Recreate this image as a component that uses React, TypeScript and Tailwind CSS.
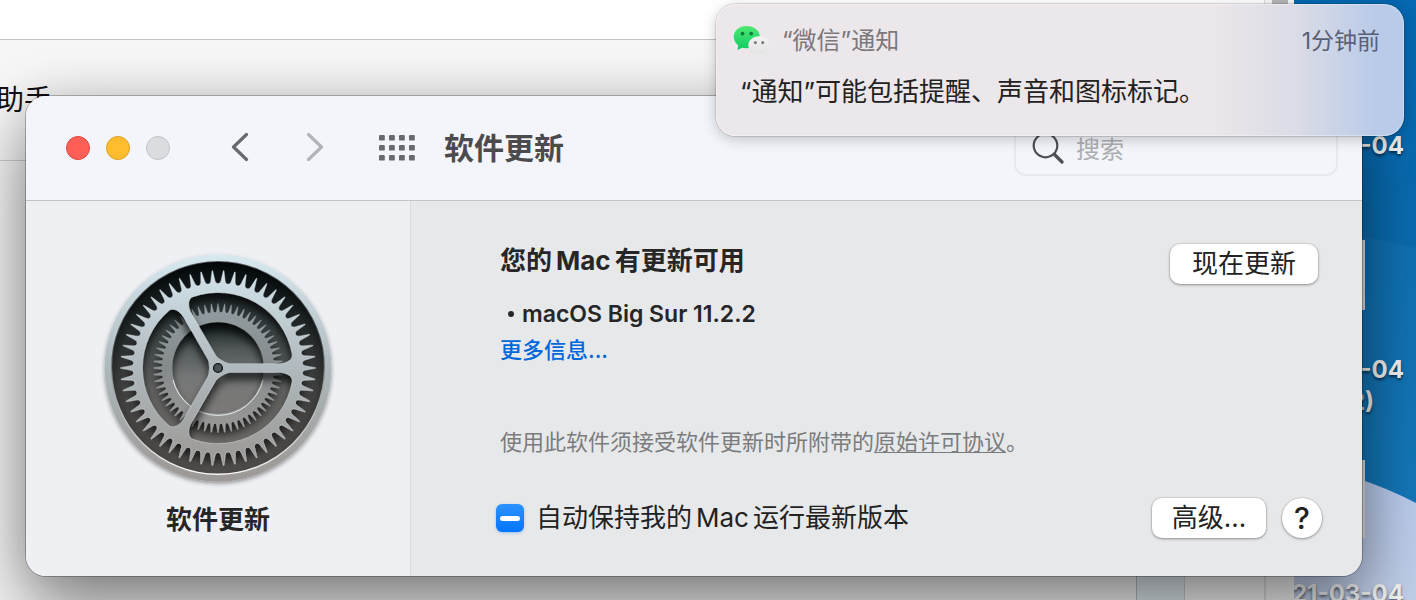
import { useEffect, useRef } from 'react';

const FONT = "font-['Inter','Noto_Sans_CJK_SC',sans-serif]";

function polar(r: number, deg: number): string {
  const a = (deg * Math.PI) / 180;
  return `${(r * Math.cos(a)).toFixed(2)} ${(r * Math.sin(a)).toFixed(2)}`;
}

function gearOutline(teeth: number, base: number, tip: number): string {
  const step = 360 / teeth;
  const rise = (tip - base) * 0.22;
  let d = `M${polar(base, -step / 2)}`;
  for (let i = 0; i < teeth; i++) {
    const c = i * step;
    d += ` L${polar(base, c - step * 0.42)}`;
    d += ` Q${polar(base + rise * 0.2, c - step * 0.24)} ${polar(base + rise, c - step * 0.2)}`;
    d += ` L${polar(tip, c - step * 0.03)} L${polar(tip, c + step * 0.03)}`;
    d += ` L${polar(base + rise, c + step * 0.2)}`;
    d += ` Q${polar(base + rise * 0.2, c + step * 0.24)} ${polar(base, c + step * 0.42)}`;
    d += ` L${polar(base, c + step / 2)}`;
  }
  return d + 'Z';
}

/* One opening between two spokes; the spokes lie at 0 and -120 degrees. */
function opening(rotation: number): string {
  const at = (x: number, y: number, mirrored = false) => {
    const r = Math.hypot(x, y);
    const t = (Math.atan2(y, x) * 180) / Math.PI;
    return polar(r, (mirrored ? -120 - t : t) + rotation);
  };
  return [
    `M${at(12, -4.3)}`,
    `L${at(61, -4.3)}`,
    `C${at(69, -4.3)} ${at(75.4, -8.5)} ${at(74.3, -14)}`,
    `A75.6 75.6 0 0 0 ${at(74.3, -14, true)}`,
    `C${at(75.4, -8.5, true)} ${at(69, -4.3, true)} ${at(61, -4.3, true)}`,
    `L${at(12, -4.3, true)}`,
    `C${at(8, -4.6, true)} ${at(8, -4.6)} ${at(12, -4.3)}Z`,
  ].join(' ');
}

function circlePath(r: number): string {
  return `M${r} 0 A${r} ${r} 0 1 0 ${-r} 0 A${r} ${r} 0 1 0 ${r} 0Z`;
}

const OUTER_GEAR = gearOutline(54, 84.5, 97.5) + opening(0) + opening(120) + opening(240) + circlePath(4.8);
const INNER_GEAR = gearOutline(60, 55.5, 64.5) + circlePath(46.3);

function GearIcon() {
  return (
    <svg viewBox="-120 -120 240 240" className="size-60" role="img" aria-label="软件更新">
      <defs>
        <linearGradient id="rim" x1="0" y1="0" x2="0" y2="1">
          <stop offset="0" stopColor="#d8e9f0" />
          <stop offset="0.5" stopColor="#adb8bc" />
          <stop offset="1" stopColor="#9c9794" />
        </linearGradient>
        <linearGradient id="well" x1="0" y1="0" x2="0" y2="1">
          <stop offset="0" stopColor="#0a1519" />
          <stop offset="0.25" stopColor="#30393c" />
          <stop offset="0.6" stopColor="#626362" />
          <stop offset="1" stopColor="#77716d" />
        </linearGradient>
        <linearGradient id="metal" gradientUnits="userSpaceOnUse" x1="0" y1="-98" x2="0" y2="98">
          <stop offset="0" stopColor="#d2e3ea" />
          <stop offset="0.5" stopColor="#b0b9bd" />
          <stop offset="1" stopColor="#9b9794" />
        </linearGradient>
        <linearGradient id="metalDark" gradientUnits="userSpaceOnUse" x1="0" y1="-64" x2="0" y2="64">
          <stop offset="0" stopColor="#929da1" />
          <stop offset="0.5" stopColor="#858a8c" />
          <stop offset="1" stopColor="#9a9997" />
        </linearGradient>
        <linearGradient id="floor" x1="0" y1="0" x2="0" y2="1">
          <stop offset="0" stopColor="#0d181b" />
          <stop offset="0.3" stopColor="#525859" />
          <stop offset="0.6" stopColor="#757777" />
          <stop offset="1" stopColor="#7b7977" />
        </linearGradient>
        <linearGradient id="edge" x1="0" y1="0" x2="0" y2="1">
          <stop offset="0.4" stopColor="#000" stopOpacity="0.6" />
          <stop offset="0.75" stopColor="#fff" stopOpacity="0.3" />
          <stop offset="1" stopColor="#fff" stopOpacity="0.95" />
        </linearGradient>
        <radialGradient id="vignette" gradientUnits="userSpaceOnUse" cx="0" cy="8" r="116">
          <stop offset="0.72" stopColor="#000" stopOpacity="0" />
          <stop offset="1" stopColor="#000" stopOpacity="0.75" />
        </radialGradient>
        <filter id="iconShadow" x="-20%" y="-20%" width="140%" height="140%">
          <feDropShadow dx="0" dy="2" stdDeviation="2" floodColor="#000" floodOpacity="0.4" />
        </filter>
        <filter id="gearShadow" x="-20%" y="-20%" width="140%" height="140%">
          <feDropShadow dx="0" dy="7" stdDeviation="4" floodColor="#000" floodOpacity="0.8" />
        </filter>
        <clipPath id="wellClip">
          <circle r="106" />
        </clipPath>
      </defs>
      <circle r="113.4" fill="url(#rim)" filter="url(#iconShadow)" />
      <circle r="106" fill="url(#well)" />
      <g clipPath="url(#wellClip)">
        <circle r="46.5" fill="url(#floor)" />
        <circle r="106" fill="url(#vignette)" />
        <g filter="url(#gearShadow)">
          <path d={INNER_GEAR} fill="url(#metalDark)" fillRule="evenodd" stroke="#c3cbcd" strokeOpacity="0.5" strokeWidth="0.5" />
        </g>
        <path d="M-45 12 A46.3 46.3 0 0 0 45 12" fill="none" stroke="#e6ebec" strokeWidth="1" />
        <g filter="url(#gearShadow)">
          <path d={OUTER_GEAR} fill="url(#metal)" fillRule="evenodd" stroke="#e9f3f6" strokeOpacity="0.6" strokeWidth="0.6" />
        </g>
      </g>
      <circle r="106.3" fill="none" stroke="url(#edge)" strokeWidth="1.4" />
      <circle r="4.4" fill="#4c5254" stroke="#14191b" strokeWidth="1.4" />
    </svg>
  );
}

function WeChatIcon() {
  return (
    <svg viewBox="0 0 38 32" className="h-8 w-[38px]" aria-hidden="true">
      <defs>
        <linearGradient id="wxGreen" x1="0" y1="0" x2="0" y2="1">
          <stop offset="0" stopColor="#4fe873" />
          <stop offset="1" stopColor="#0ecb62" />
        </linearGradient>
        <linearGradient id="wxWhite" x1="0" y1="0" x2="0" y2="1">
          <stop offset="0" stopColor="#f3f3f3" />
          <stop offset="1" stopColor="#e2e2e3" />
        </linearGradient>
      </defs>
      <path d="M14.500 1C7.200 1 1.800 5.700 1.800 11.800c0 3.500 1.600 6.500 4.400 8.500L5.500 25l4.600-2.300c1.400.300 2.900.500 4.400.500 7.400 0 13.300-4.900 13.300-11.400S21.900 1 14.500 1Z" fill="url(#wxGreen)" />
      <circle cx="10.500" cy="8.600" r="1.900" fill="#087f3c" />
      <circle cx="19.200" cy="8.600" r="1.900" fill="#087f3c" />
      <path d="M27 11.200c-6.100 0-10.700 4-10.700 9s4.600 9 10.700 9c1.300 0 2.500-.200 3.600-.500l4.400 2-.800-3.800c2.100-1.600 3.300-4 3.300-6.700 0-5-4.500-9-10.500-9Z" fill="url(#wxWhite)" />
      <circle cx="23.400" cy="17.600" r="1.600" fill="#7f7f80" />
      <circle cx="30.700" cy="17.600" r="1.600" fill="#7f7f80" />
    </svg>
  );
}

function Wallpaper() {
  return (
    <svg className="absolute inset-y-0 right-0 h-full w-[122px]" viewBox="0 0 122 600" preserveAspectRatio="xMaxYMin slice" aria-hidden="true">
      <defs>
        <linearGradient id="sky" x1="0" y1="0" x2="0" y2="1">
          <stop offset="0" stopColor="#0467b0" />
          <stop offset="0.4" stopColor="#0a6cb0" />
          <stop offset="1" stopColor="#1278ba" />
        </linearGradient>
        <linearGradient id="hill" x1="0" y1="0" x2="0" y2="1">
          <stop offset="0" stopColor="#b9ccef" />
          <stop offset="1" stopColor="#c2d0ea" />
        </linearGradient>
      </defs>
      <rect width="122" height="600" fill="url(#sky)" />
      <path d="M0 232Q70 234 122 248V600H0Z" fill="#2a86c4" fillOpacity="0.2" />
      <path d="M0 464Q62 472 122 503V600H0Z" fill="url(#hill)" />
    </svg>
  );
}

const LABEL = 'absolute text-2xl/8 font-bold text-[#f4f4f4] [text-shadow:0_2px_3px_rgba(0,0,0,0.6)]';

function Desktop() {
  return (
    <div className="absolute inset-0">
      <Wallpaper />
      <span className={`${LABEL} right-3 top-[130px]`}>-04</span>
      <div className="absolute right-[51px] top-60 h-[70px] w-10 bg-[#e4e4e4]" />
      <span className={`${LABEL} right-3 top-[354px]`}>-04</span>
      <span className={`${LABEL} right-[42px] top-[386px]`}>2)</span>
      <div className="absolute right-[51px] top-[460px] h-[78px] w-10 bg-[#e4e4e4]" />
      <span className={`${LABEL} right-3 top-[578px]`}>21-03-04</span>
    </div>
  );
}

function BackgroundWindow() {
  return (
    <div className="absolute inset-y-0 left-0 right-[122px] flex flex-col bg-[#f6f6f6]">
      <div className="flex h-10 shrink-0 justify-end border-b border-[#c4c4c4] bg-white">
        <div className="flex w-[30px] justify-center border-l border-[#dcdcdc] bg-[#f7f7f7]">
          <div className="h-2 w-4 bg-[#b5b5b5]" />
        </div>
      </div>
      <div className="flex h-[121px] shrink-0 items-center border-b border-[#cfcfcf] bg-[#f6f6f6]">
        <span className="-ml-1 text-[28px]/10 text-[#111]">助手</span>
      </div>
      <div className="flex flex-1 justify-end">
        <div className="w-12 border-l border-[#b8c0c4] bg-[#e2ecf0]" />
        <div className="w-20 border-l border-[#c9d0d3]" />
        <div className="w-[30px] border-l-2 border-[#dcdcdc]" />
      </div>
    </div>
  );
}

function Toolbar() {
  return (
    <header className="flex h-[105px] shrink-0 items-center border-b border-[#c3c4c8] bg-[#f3f5fa] pl-10 pr-6">
      <div className="flex gap-4">
        <button type="button" aria-label="关闭" className="size-6 rounded-full border border-[#e2463f] bg-[#ff5f57]" />
        <button type="button" aria-label="最小化" className="size-6 rounded-full border border-[#dfa023] bg-[#febc2e]" />
        <button type="button" aria-label="缩放" disabled className="size-6 rounded-full border border-[#c3c4c7] bg-[#dbdce0]" />
      </div>
      <div className="ml-[60px] flex gap-[53px]">
        <button type="button" aria-label="后退" className="text-[#68696d]">
          <svg viewBox="0 0 22 30" className="h-[30px] w-[22px]" fill="none" stroke="currentColor" strokeWidth="3.200" strokeLinecap="round" strokeLinejoin="round">
            <path d="M16.500 1.500 3.500 14 16.500 26.500" />
          </svg>
        </button>
        <button type="button" aria-label="前进" disabled className="text-[#b3b4b8]">
          <svg viewBox="0 0 22 30" className="h-[30px] w-[22px]" fill="none" stroke="currentColor" strokeWidth="3.200" strokeLinecap="round" strokeLinejoin="round">
            <path d="M3.500 1.500 16.500 14 3.500 26.500" />
          </svg>
        </button>
      </div>
      <button type="button" aria-label="显示全部" className="ml-[52px] text-[#68696d]">
        <svg viewBox="0 0 36 26" className="h-[26px] w-9" fill="currentColor">
          {[0, 10, 20].map((y) => [0, 10, 20, 30].map((x) => <rect key={`${x}-${y}`} x={x} y={y} width="5.800" height="5.600" rx="1.200" />))}
        </svg>
      </button>
      <h1 className="ml-[29px] text-[30px]/10 font-bold text-[#4b4b4d]">软件更新</h1>
      <label className="ml-auto flex h-14 w-[324px] items-center rounded-xl border-2 border-[#e6e8ec] pl-4">
        <svg viewBox="0 0 32 32" className="size-8 shrink-0 text-[#4e4f52]" fill="none" stroke="currentColor" strokeLinecap="round" aria-hidden="true">
          <circle cx="13.500" cy="13.500" r="11.800" strokeWidth="2.200" />
          <path d="M22.500 22.500 30 30" strokeWidth="3.200" />
        </svg>
        <input type="search" aria-label="搜索" placeholder="搜索" className="ml-3 min-w-0 flex-1 bg-transparent pt-1 text-2xl/8 outline-none placeholder:text-[#adaeb2]" />
      </label>
    </header>
  );
}

const BUTTON = 'h-10 bg-white text-[26px]/9 text-[#222] shadow-[0_0_0_1px_rgba(0,0,0,0.06),0_1px_3px_rgba(0,0,0,0.35)]';

function UpdatePane() {
  const auto = useRef<HTMLInputElement>(null);
  useEffect(() => {
    if (auto.current) auto.current.indeterminate = true;
  }, []);

  return (
    <main className="flex min-w-0 flex-1 flex-col border-l border-[#dadbdd] bg-[#e7e8ea] pb-[38px] pl-[89px] pt-[42px]">
      <div className="flex items-start justify-between pr-11">
        <div>
          <h2 className="text-[26px]/9 font-bold text-[#262626]">
            您的<span className="mx-1">Mac</span>有更新可用
          </h2>
          <ul className="mt-[17px]">
            <li className="flex items-center gap-2 pl-2 text-[23px]/9 font-semibold text-[#262626]">
              <span className="size-[6px] rounded-full bg-[#262626]" />
              macOS Big Sur 11.2.2
            </li>
          </ul>
          <a href="#more" className="block text-[22px]/9 font-medium text-[#0068da]">更多信息...</a>
        </div>
        <button type="button" className={`${BUTTON} mt-px w-[148px] rounded-[10px]`}>现在更新</button>
      </div>
      <p className="mb-10 mt-auto text-[22px]/8 text-[#7b7c7e]">
        使用此软件须接受软件更新时所附带的<a href="#license" className="underline decoration-1 underline-offset-2">原始许可协议</a>。
      </p>
      <div className="flex items-center pr-10">
        <label className="-ml-1 flex items-center gap-3 text-[26px]/9 text-[#222]">
          <input
            ref={auto}
            type="checkbox"
            className="flex size-7 appearance-none items-center justify-center rounded-md bg-linear-to-b from-[#2b92ff] to-[#0075ff] shadow-[0_1px_3px_rgba(0,117,255,0.35)] before:h-[5px] before:w-5 before:rounded-full before:bg-white before:content-['']"
          />
          <span>自动保持我的<span className="mx-1">Mac</span>运行最新版本</span>
        </label>
        <button type="button" className={`${BUTTON} ml-auto w-[114px] rounded-[10px]`}>高级...</button>
        <button type="button" aria-label="帮助" className={`${BUTTON} ml-4 w-10 rounded-full text-[30px] font-medium`}>?</button>
      </div>
    </main>
  );
}

function PreferencesWindow() {
  return (
    <section className="absolute left-[26px] right-[54px] top-24 flex min-h-[480px] flex-col overflow-hidden rounded-[20px] shadow-[0_0_0_1px_rgba(0,0,0,0.25),0_0_40px_rgba(0,0,0,0.1),0_32px_72px_rgba(0,0,0,0.48)]">
      <Toolbar />
      <div className="flex flex-1">
        <aside className="flex w-96 shrink-0 flex-col items-center bg-[#eff0f3] pt-[47px]">
          <GearIcon />
          <p className="mt-[14px] text-[26px]/9 font-bold text-[#262626]">软件更新</p>
        </aside>
        <UpdatePane />
      </div>
    </section>
  );
}

function Notification() {
  return (
    <aside className="absolute right-3 top-1 flex h-[132px] w-[688px] flex-col rounded-[20px] bg-linear-to-r from-[#ece7ea] from-72% via-[#d9dbe6] via-85% to-[#b9cbe9] to-96% pl-4 pr-6 pt-4 shadow-[0_0_0_1px_rgba(0,0,0,0.12),0_3px_14px_rgba(0,0,0,0.22),inset_0_0_0_1px_rgba(255,255,255,0.35)]">
      <div className="flex items-center">
        <WeChatIcon />
        <span className="ml-3 text-2xl/[42px] text-[#7b777a]">“微信”通知</span>
        <time className="ml-auto text-[23px]/10 text-[#5a6074]">1分钟前</time>
      </div>
      <p className="ml-2 mt-3 text-[26px]/9 text-[#222]">“通知”可能包括提醒、声音和图标标记。</p>
    </aside>
  );
}

export default function App() {
  return (
    <div lang="zh-CN" className={`relative h-screen overflow-hidden bg-[#f0f0f0] ${FONT}`}>
      <Desktop />
      <BackgroundWindow />
      <PreferencesWindow />
      <Notification />
    </div>
  );
}
